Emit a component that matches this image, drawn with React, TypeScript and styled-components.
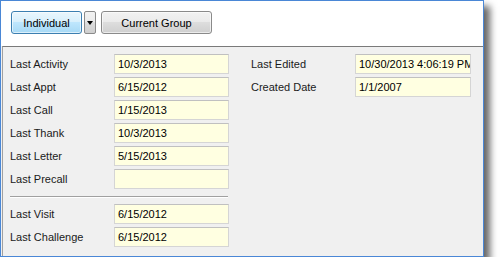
import React from 'react';
import styled, { createGlobalStyle } from 'styled-components';

const GlobalStyle = createGlobalStyle`
    html, body {
        margin: 0;
        padding: 0;
        background: #ffffff;
    }
    body {
        font-family: Tahoma, "Liberation Sans", "DejaVu Sans", sans-serif;
        font-size: 11px;
        color: #1a1a1a;
    }
`;

interface Field {
    label: string
    value: string
}

const leftTop: Field[] = [
    { label: 'Last Activity', value: '10/3/2013' },
    { label: 'Last Appt', value: '6/15/2012' },
    { label: 'Last Call', value: '1/15/2013' },
    { label: 'Last Thank', value: '10/3/2013' },
    { label: 'Last Letter', value: '5/15/2013' },
    { label: 'Last Precall', value: '' },
];

const leftBottom: Field[] = [
    { label: 'Last Visit', value: '6/15/2012' },
    { label: 'Last Challenge', value: '6/15/2012' },
];

const rightFields: Field[] = [
    { label: 'Last Edited', value: '10/30/2013 4:06:19 PM' },
    { label: 'Created Date', value: '1/1/2007' },
];

const FieldRow = (props: Field) => (
    <Row>
        <Label>{props.label}</Label>
        <Box>{props.value}</Box>
    </Row>
);

const App = () => {
    return (
        <>
            <GlobalStyle />
            <Frame>
                <Toolbar>
                    <ToggleButton active>Individual</ToggleButton>
                    <DropButton>
                        <Arrow />
                    </DropButton>
                    <ToggleButton wide>Current Group</ToggleButton>
                </Toolbar>
                <Panel>
                    <Column>
                        {leftTop.map((f) => <FieldRow key={f.label} {...f} />)}
                        <Divider />
                        {leftBottom.map((f) => <FieldRow key={f.label} {...f} />)}
                    </Column>
                    <Column>
                        {rightFields.map((f) => <FieldRow key={f.label} {...f} />)}
                    </Column>
                </Panel>
            </Frame>
        </>
    );
};

const Frame = styled.div`
    width: 482px;
    height: 255px;
    border: 1px solid #4a87d6;
    background: #f0f0f0;
    box-shadow: 6px 6px 7px rgba(0, 0, 0, 0.6);
    display: flex;
    flex-direction: column;
`;

const Toolbar = styled.div`
    height: 45px;
    background: #ffffff;
    display: flex;
    align-items: flex-start;
    padding: 10px 0 0 10px;
    box-sizing: border-box;
    gap: 2px;
`;

const ToggleButton = styled.div<{ active?: boolean; wide?: boolean }>`
    width: ${(p) => (p.wide ? '111px' : '71px')};
    margin-left: ${(p) => (p.wide ? '3px' : '0')};
    height: 23px;
    box-sizing: border-box;
    border: 1px solid ${(p) => (p.active ? '#3c7fb1' : '#8a8a8a')};
    border-radius: 3px;
    background: ${(p) =>
        p.active
            ? 'linear-gradient(to bottom, #eaf6fd 0%, #d9f0fc 45%, #bee6fd 50%, #a7d9f5 100%)'
            : 'linear-gradient(to bottom, #f2f2f2 0%, #ebebeb 45%, #dddddd 50%, #cfcfcf 100%)'};
    box-shadow: inset 0 0 0 1px rgba(255, 255, 255, 0.6);
    display: flex;
    align-items: center;
    justify-content: center;
    color: #000;
    font-size: 11px;
`;

const DropButton = styled.div`
    width: 12px;
    height: 23px;
    box-sizing: border-box;
    border: 1px solid #8a8a8a;
    border-radius: 2px;
    background: linear-gradient(to bottom, #f2f2f2 0%, #ebebeb 45%, #dddddd 50%, #cfcfcf 100%);
    display: flex;
    align-items: center;
    justify-content: center;
`;

const Arrow = styled.span`
    width: 0;
    height: 0;
    border-left: 3px solid transparent;
    border-right: 3px solid transparent;
    border-top: 4px solid #000;
`;

const Panel = styled.div`
    flex: 1;
    margin-left: 1px;
    border-top: 1px solid #7a7a7a;
    border-left: 1px solid #a0a0a0;
    background: #f0f0f0;
    display: grid;
    grid-template-columns: 219px 221px;
    column-gap: 22px;
    align-items: start;
    padding: 7px 0 0 7px;
`;

const Column = styled.div`
    display: flex;
    flex-direction: column;
    gap: 3px;
`;

const Row = styled.div`
    display: flex;
    align-items: center;
    height: 20px;
`;

const Label = styled.div`
    width: 104px;
    flex-shrink: 0;
    color: #1a1a1a;
    white-space: nowrap;
`;

const Box = styled.div`
    width: 116px;
    height: 20px;
    box-sizing: border-box;
    border: 1px solid #d5d5d5;
    border-top-color: #c0c0c0;
    background: #ffffe1;
    padding: 0 3px;
    display: flex;
    align-items: center;
    color: #000;
    white-space: nowrap;
    overflow: hidden;
`;

const Divider = styled.div`
    width: 218px;
    height: 0;
    border-top: 1px solid #a0a0a0;
    border-bottom: 1px solid #ffffff;
    margin: 4px 0 3px;
`;

export default App;
